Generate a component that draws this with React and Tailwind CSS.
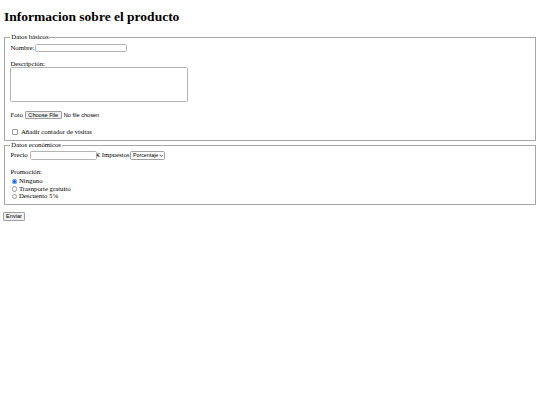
export default function App() {
  return (
    <div className="min-h-[405px] bg-white px-[4px] font-['Liberation_Serif',serif] text-[6.75px] leading-[8.3px] text-black">
      <h1 className="mt-[8.9px] mb-[8.6px] text-[13.5px] font-bold leading-[16px]">
        Informacion sobre el producto
      </h1>

      <fieldset className="border border-[#a6a6a6] px-[5.4px] pb-[4.5px]">
        <legend className="px-[0.9px]">Datos básicos</legend>
        <div className="mt-[1.5px] flex h-[9px] items-center">
          <label>Nombre:</label>
          <input type="text" className="ml-[0.5px] h-[8.5px] w-[92px] rounded-[1.5px] border border-[#b4b4b4] bg-white" />
        </div>
        <div className="mt-[8px] h-[7px]">Descripción:</div>
        <textarea className="block h-[35px] w-[178px] resize-none rounded-[1.5px] border border-[#b4b4b4] bg-white" />
        <div className="mt-[8px] flex h-[9px] items-center">
          <span>Foto</span>
          <span className="ml-[2px] flex h-[8px] w-[37px] items-center justify-center rounded-[1px] border border-[#a0a0a0] bg-[#efefef] font-['Liberation_Sans',sans-serif] text-[5.6px] leading-[6px]">
            Choose File
          </span>
          <span className="ml-[2px] font-['Liberation_Sans',sans-serif] text-[5.6px]">No file chosen</span>
        </div>
        <label className="mt-[8.5px] flex h-[8px] items-center">
          <span className="ml-[2px] mr-[3px] h-[5.5px] w-[5.5px] rounded-[1px] border border-[#9a9a9a] bg-white" />
          Añadir contador de visitas
        </label>
      </fieldset>

      <fieldset className="border border-[#a6a6a6] px-[5.4px] pb-[3.5px]">
        <legend className="px-[0.9px]">Datos económicos</legend>
        <div className="mt-[1.5px] flex h-[9px] items-center">
          <label>Precio</label>
          <input type="text" className="ml-[2px] h-[8.5px] w-[67px] rounded-[1.5px] border border-[#b4b4b4] bg-white" />
          <span>€ Impuestos</span>
          <div className="ml-[1px] flex h-[8.5px] w-[35px] items-center justify-between rounded-[1.5px] border border-[#a0a0a0] bg-white pl-[1.5px] pr-[1px] font-['Liberation_Sans',sans-serif] text-[5.3px]">
            <span>Porcentaje</span>
            <svg width="4.5" height="3.5" viewBox="0 0 10 8" fill="none" stroke="#222" strokeWidth="1.8">
              <path d="M1.5 2 5 5.5 8.5 2" />
            </svg>
          </div>
        </div>
        <div className="mt-[7.5px] h-[8px]">Promoción:</div>
        <div className="mt-[2px] flex flex-col">
          {[
            ['Ninguno', true],
            ['Trasnporte gratuito', false],
            ['Descuento 5%', false],
          ].map(([t, c]) => (
            <label key={t} className="flex h-[7.6px] items-center">
              {c ? (
                <span className="ml-[1.5px] mr-[1.5px] flex h-[5.5px] w-[5.5px] items-center justify-center rounded-full bg-[#1a73e8]">
                  <span className="h-[2.5px] w-[2.5px] rounded-full bg-[#0060df] ring-[0.6px] ring-[#d8e6fb]" />
                </span>
              ) : (
                <span className="ml-[1.5px] mr-[1.5px] h-[5.5px] w-[5.5px] rounded-full border border-[#9a9a9a] bg-white" />
              )}
              {t}
            </label>
          ))}
        </div>
      </fieldset>

      <button type="button" className="mt-[7px] ml-[-1px] flex h-[9px] w-[22px] items-center justify-center rounded-[1px] border border-[#a0a0a0] bg-[#efefef] font-['Liberation_Sans',sans-serif] text-[5.6px] leading-[6px]">
        Enviar
      </button>
    </div>
  )
}
